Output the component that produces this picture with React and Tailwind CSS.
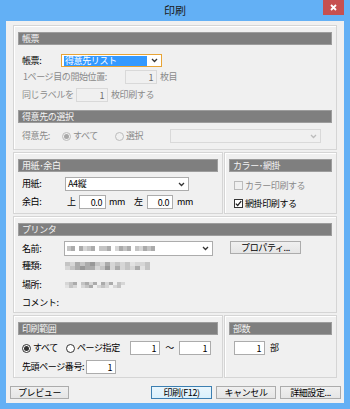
import React from 'react';

const font = "font-['Meiryo_UI','Noto_Sans_CJK_JP',sans-serif]";

const Group = ({ className = '', children }) => (
    <div className={`border border-[#d5d5d5] shadow-[inset_1px_1px_0_#fff] px-[4px] pt-[6px] flex flex-col ${className}`}>
        {children}
    </div>
);

const Header = ({ children, className = '' }) => (
    <div className={`h-[13px] shrink-0 bg-[#7f7f7f] border border-[#9d9d9d] text-[#f4f4f4] flex items-center pl-[3px] leading-none ${className}`}>
        {children}
    </div>
);

const Chevron = ({ color = '#333' }) => (
    <svg width="7" height="5" viewBox="0 0 7 5">
        <path d="M1 1 L3.5 3.5 L6 1" fill="none" stroke={color} strokeWidth="1.3" />
    </svg>
);

const Select = ({ className = '', children, disabled }) => (
    <div className={`flex items-center border ${disabled ? 'border-[#d9d9d9] bg-[#f0f0f0]' : 'border-[#acacac] bg-white'} ${className}`}>
        <div className="flex-1 h-full flex items-center pl-[2px]">{children}</div>
        <div className="w-[13px] flex justify-center">
            <Chevron color={disabled ? '#bcbcbc' : '#333'} />
        </div>
    </div>
);

const Input = ({ value, className = '', disabled }) => (
    <div className={`border flex items-center justify-end pr-[3px] leading-none ${disabled ? 'border-[#d9d9d9] bg-[#f0f0f0] text-[#6d6d6d]' : 'border-[#acacac] bg-white text-black'} ${className}`}>
        {value}
    </div>
);

const Radio = ({ checked, disabled }) => (
    <div className={`w-[9px] h-[9px] rounded-full border flex items-center justify-center shrink-0 ${disabled ? 'border-[#bcbcbc] bg-[#f0f0f0]' : 'border-[#333] bg-white'}`}>
        {checked && <div className={`w-[5px] h-[5px] rounded-full ${disabled ? 'bg-[#a8a8a8]' : 'bg-[#333]'}`} />}
    </div>
);

const Checkbox = ({ checked, disabled }) => (
    <div className={`w-[9px] h-[9px] border flex items-center justify-center shrink-0 ${disabled ? 'border-[#bcbcbc] bg-[#f0f0f0]' : 'border-[#333] bg-white'}`}>
        {checked && (
            <svg width="7" height="7" viewBox="0 0 7 7">
                <path d="M0.8 3.6 L2.7 5.5 L6.2 1.2" fill="none" stroke="#222" strokeWidth="1.3" />
            </svg>
        )}
    </div>
);

const Button = ({ children, primary, className = '' }) => (
    <div className={`h-[13px] flex items-center justify-center border leading-none ${primary ? 'border-[#3c7fb1] bg-gradient-to-b from-[#eaf6fd] to-[#d9f0fc]' : 'border-[#acacac] bg-gradient-to-b from-[#f0f0f0] to-[#e5e5e5]'} ${className}`}>
        {children}
    </div>
);

// pixelated placeholder for hidden printer details
const shades = { a: '#c4c4c4', b: '#ababab', c: '#d6d6d6', d: '#989898', e: '#e2e2e2' };
const Mosaic = ({ rows, w = 4, h = 5 }) => (
    <div className="flex flex-col">
        {rows.map((row, i) => (
            <div key={i} className="flex">
                {row.split('').map((ch, j) => (
                    <div key={j} style={{ width: w, height: h, background: shades[ch] || 'transparent' }} />
                ))}
            </div>
        ))}
    </div>
);

export default function App() {
    return (
        <div className={`w-[350px] h-[409px] bg-[#63b0f5] flex flex-col px-[6px] pb-[6px] text-[9px] tracking-[-0.4px] text-black ${font}`}>
            {/* Title bar */}
            <div className="h-[21px] shrink-0 relative flex items-center justify-center">
                <span className="text-[11px] tracking-[0px] text-[#1b1b1b] pb-[1px]">印刷</span>
                <div className="absolute top-0 right-0 w-[21px] h-[15px] bg-[#c75050] flex items-center justify-center">
                    <svg width="7" height="7" viewBox="0 0 7 7">
                        <path d="M1 1 L6 6 M6 1 L1 6" stroke="#fff" strokeWidth="1.8" />
                    </svg>
                </div>
            </div>

            {/* Body */}
            <div className="flex-1 bg-[#f0f0f0] flex flex-col pt-[4px]">
                <div className="px-[7px] flex flex-col gap-[2px]">
                    {/* 帳票 */}
                    <Group className="h-[125px]">
                        <Header>帳票</Header>
                        <div className="flex items-center h-[13px] mt-[9px] pl-[4px]">
                            <span className="w-[39px]">帳票:</span>
                            <Select className="w-[101px] h-[13px] !border-[#e8a435]">
                                <span className="bg-[#3399ff] text-white w-[83px] h-[10px] flex items-center pl-[1px] leading-none">得意先リスト</span>
                            </Select>
                        </div>
                        <div className="flex items-center h-[14px] mt-[3px] pl-[5px] text-[#8a8a8a]">
                            <span className="w-[102px]">1ページ目の開始位置:</span>
                            <Input value="1" disabled className="w-[32px] h-[14px]" />
                            <span className="ml-[3px]">枚目</span>
                        </div>
                        <div className="flex items-center h-[14px] mt-[4px] pl-[4px] text-[#8a8a8a]">
                            <span className="w-[54px]">同じラベルを</span>
                            <Input value="1" disabled className="w-[32px] h-[14px]" />
                            <span className="ml-[3px]">枚印刷する</span>
                        </div>
                        <Header className="mt-[8px] h-[12px]">得意先の選択</Header>
                        <div className="flex items-center h-[14px] mt-[6px] pl-[4px] text-[#8a8a8a]">
                            <span className="w-[40px]">得意先:</span>
                            <div className="w-[53px] flex items-center gap-[2px]">
                                <Radio checked disabled />
                                <span>すべて</span>
                            </div>
                            <div className="w-[55px] flex items-center gap-[2px]">
                                <Radio disabled />
                                <span>選択</span>
                            </div>
                            <Select disabled className="w-[151px] h-[14px]" />
                        </div>
                    </Group>

                    {/* 用紙・余白 / カラー・網掛 */}
                    <div className="flex h-[62px] gap-[1px]">
                        <Group className="w-[210px]">
                            <Header>用紙･余白</Header>
                            <div className="flex items-center h-[14px] mt-[5px] pl-[4px]">
                                <span className="w-[43px]">用紙:</span>
                                <Select className="w-[124px] h-[14px]">
                                    <span className="leading-[12px]">A4縦</span>
                                </Select>
                            </div>
                            <div className="flex items-center h-[14px] mt-[4px] pl-[4px]">
                                <span className="w-[45px]">余白:</span>
                                <span className="w-[12px]">上</span>
                                <Input value="0.0" className="w-[27px] h-[14px]" />
                                <span className="ml-[3px] w-[25px]">mm</span>
                                <span className="w-[13px]">左</span>
                                <Input value="0.0" className="w-[26px] h-[14px]" />
                                <span className="ml-[4px]">mm</span>
                            </div>
                        </Group>
                        <Group className="flex-1 px-[3px]">
                            <Header>カラー･網掛</Header>
                            <div className="flex items-center h-[11px] mt-[8px] pl-[5px] gap-[2px] text-[#8a8a8a]">
                                <Checkbox disabled />
                                <span>カラー印刷する</span>
                            </div>
                            <div className="flex items-center h-[11px] mt-[7px] pl-[5px] gap-[2px]">
                                <Checkbox checked />
                                <span>網掛印刷する</span>
                            </div>
                        </Group>
                    </div>

                    {/* プリンタ */}
                    <Group className="h-[97px] pt-[5px]">
                        <Header>プリンタ</Header>
                        <div className="flex items-center h-[15px] mt-[5px] pl-[4px]">
                            <span className="w-[42px]">名前:</span>
                            <Select className="w-[149px] h-[15px]">
                                <Mosaic rows={['ab.bcab.aab.cbab.acbab']} w={4} h={5} />
                            </Select>
                            <Button className="w-[71px] ml-[17px] -mt-[2px]">プロパティ...</Button>
                        </div>
                        <div className="flex items-center h-[14px] mt-[3px] pl-[4px]">
                            <span className="w-[43px]">種類:</span>
                            <Mosaic rows={['acbabdacbcacaecca', 'cabdbbcadcbcacbea']} w={5} h={4} />
                        </div>
                        <div className="flex items-center h-[14px] mt-[5px] pl-[4px]">
                            <span className="w-[43px]">場所:</span>
                            <Mosaic rows={['cab.abcb.bcb.ac', 'eac.cab.cac.ca']} w={4} h={3} />
                        </div>
                        <div className="flex items-center h-[14px] mt-[4px] pl-[4px]">
                            <span>コメント:</span>
                        </div>
                    </Group>

                    {/* 印刷範囲 / 部数 */}
                    <div className="flex h-[63px] gap-[1px]">
                        <Group className="w-[210px] pt-[6px]">
                            <Header>印刷範囲</Header>
                            <div className="flex items-center h-[14px] mt-[6px] pl-[4px]">
                                <Radio checked />
                                <span className="ml-[2px] w-[33px]">すべて</span>
                                <Radio />
                                <span className="ml-[2px] w-[53px]">ページ指定</span>
                                <Input value="1" className="w-[30px] h-[14px]" />
                                <span className="w-[19px] text-center">～</span>
                                <Input value="1" className="w-[32px] h-[14px]" />
                            </div>
                            <div className="flex items-center h-[14px] mt-[5px] pl-[4px]">
                                <span className="w-[64px]">先頭ページ番号:</span>
                                <Input value="1" className="w-[30px] h-[14px]" />
                            </div>
                        </Group>
                        <Group className="flex-1 px-[3px] pt-[6px]">
                            <Header>部数</Header>
                            <div className="flex items-center h-[14px] mt-[6px] pl-[5px]">
                                <Input value="1" className="w-[31px] h-[14px]" />
                                <span className="ml-[5px]">部</span>
                            </div>
                        </Group>
                    </div>
                </div>

                {/* Buttons */}
                <div className="flex items-center mt-[8px] px-[4px]">
                    <Button className="w-[59px]">プレビュー</Button>
                    <Button primary className="w-[61px] ml-auto">印刷(F12)</Button>
                    <Button className="w-[60px] ml-[4px]">キャンセル</Button>
                    <Button className="w-[61px] ml-[4px] mr-[-1px]">詳細設定...</Button>
                </div>
            </div>
        </div>
    );
}
